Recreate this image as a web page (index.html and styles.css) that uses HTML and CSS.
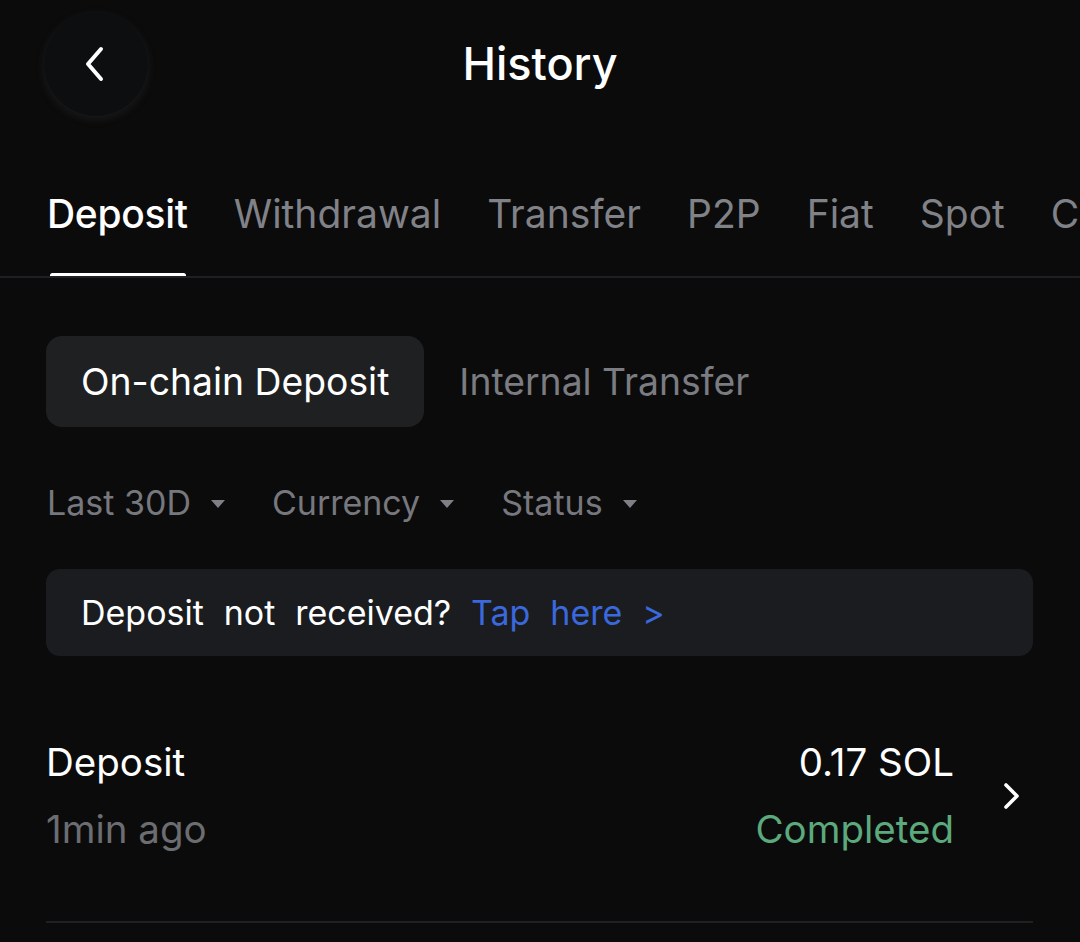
FILE: index.html
```html
<!DOCTYPE html>
<html lang="en">
<head>
<meta charset="utf-8">
<title>History</title>
<link rel="stylesheet" href="styles.css">
</head>
<body>
<div class="screen">
  <header class="header">
    <div class="back-wrap">
      <button class="back" aria-label="Back">
        <svg width="26" height="38" viewBox="0 0 26 38"><path d="M20 4 L7 19 L20 34" fill="none" stroke="#fff" stroke-width="4" stroke-linecap="round" stroke-linejoin="round"/></svg>
      </button>
    </div>
    <h1 class="title">History</h1>
    <div></div>
  </header>

  <nav class="tabs">
    <span class="tab active">Deposit</span>
    <span class="tab">Withdrawal</span>
    <span class="tab">Transfer</span>
    <span class="tab">P2P</span>
    <span class="tab">Fiat</span>
    <span class="tab">Spot</span>
    <span class="tab">Convert</span>
  </nav>

  <div class="segments">
    <span class="seg active">On-chain Deposit</span>
    <span class="seg">Internal Transfer</span>
  </div>

  <div class="filters">
    <span class="filter">Last 30D<i class="caret"></i></span>
    <span class="filter">Currency<i class="caret"></i></span>
    <span class="filter">Status<i class="caret"></i></span>
  </div>

  <div class="banner">Deposit not received? <span class="link">Tap here &gt;</span></div>

  <div class="record">
    <div class="rec-left">
      <div class="rec-title">Deposit</div>
      <div class="rec-time">1min ago</div>
    </div>
    <div class="rec-right">
      <div class="rec-amount">0.17 SOL</div>
      <div class="rec-status">Completed</div>
    </div>
    <svg class="rec-chev" width="30" height="30" viewBox="0 0 30 30"><path d="M3 4 L14 15 L3 26" fill="none" stroke="#fff" stroke-width="3.6" stroke-linecap="round" stroke-linejoin="round"/></svg>
  </div>
</div>
</body>
</html>
```

FILE: styles.css
```css
* { box-sizing: border-box; }
html, body {
  margin: 0;
  padding: 0;
  background: #0b0b0c;
}
body {
  font-family: Inter, Roboto, "Liberation Sans", sans-serif;
  color: #ffffff;
  width: 1080px;
  height: 942px;
  overflow: hidden;
}
.screen { width: 1080px; }

.header {
  display: grid;
  grid-template-columns: 1fr auto 1fr;
  align-items: center;
  height: 116px;
  padding: 12px 44px 0;
}
.back-wrap { display: flex; }
.back {
  width: 104px;
  height: 104px;
  border-radius: 50%;
  border: none;
  background: #0d0e10;
  box-shadow: 0 3px 10px rgba(90, 90, 90, 0.2), 0 0 2px rgba(120, 120, 120, 0.1);
  display: flex;
  align-items: center;
  justify-content: center;
  padding: 0 4px 0 0;
}
.title {
  margin: 0;
  font-size: 45px;
  font-weight: 500;
  line-height: 60px;
}

.tabs {
  display: flex;
  gap: 46px;
  padding-left: 47px;
  border-bottom: 2px solid #1f2023;
  white-space: nowrap;
  overflow: hidden;
}
.tab {
  position: relative;
  font-size: 39px;
  line-height: 56px;
  padding-top: 70px;
  padding-bottom: 34px;
  color: #818287;
  flex: none;
}
.tab.active {
  color: #ffffff;
  font-weight: 500;
  letter-spacing: -0.3px;
}
.tab.active::after {
  content: "";
  position: absolute;
  left: 3px;
  right: 2px;
  bottom: -2px;
  height: 5px;
  border-radius: 3px;
  background: #ffffff;
}

.segments {
  display: flex;
  padding-left: 46px;
  margin-top: 58px;
}
.seg {
  height: 91px;
  display: flex;
  align-items: center;
  padding: 0 35px;
  font-size: 37.3px;
  color: #7b7c81;
  border-radius: 16px;
}
.seg.active {
  background: #1f2022;
  color: #ffffff;
}

.filters {
  display: flex;
  padding-left: 47px;
  margin-top: 54px;
  line-height: 44px;
  gap: 47px;
}
.filter {
  display: flex;
  align-items: center;
  font-size: 34px;
  color: #77787d;
}
.caret {
  display: inline-block;
  width: 0;
  height: 0;
  margin-left: 20px;
  margin-top: 2px;
  border-left: 7px solid transparent;
  border-right: 7px solid transparent;
  border-top: 8px solid #7f8085;
}

.banner {
  margin: 44px 47px 0 46px;
  height: 87px;
  border-radius: 14px;
  background: #1b1c1f;
  display: flex;
  align-items: center;
  padding-left: 35px;
  font-size: 34px;
  word-spacing: 10.3px;
  white-space: pre;
  color: #ffffff;
}
.link {
  color: #3a68dd;
}

.record {
  display: flex;
  align-items: center;
  margin: 73px 47px 0 46px;
  padding-bottom: 58px;
  border-bottom: 2px solid #1f2023;
  font-size: 38.5px;
  line-height: 67px;
}
.rec-left { flex: 1; }
.rec-title { color: #ffffff; }
.rec-time { color: #6c6d71; }
.rec-right {
  text-align: right;
  margin-right: 49px;
}
.rec-amount { color: #ffffff; }
.rec-status { color: #5ba97c; }
.rec-chev { flex: none; }
```
